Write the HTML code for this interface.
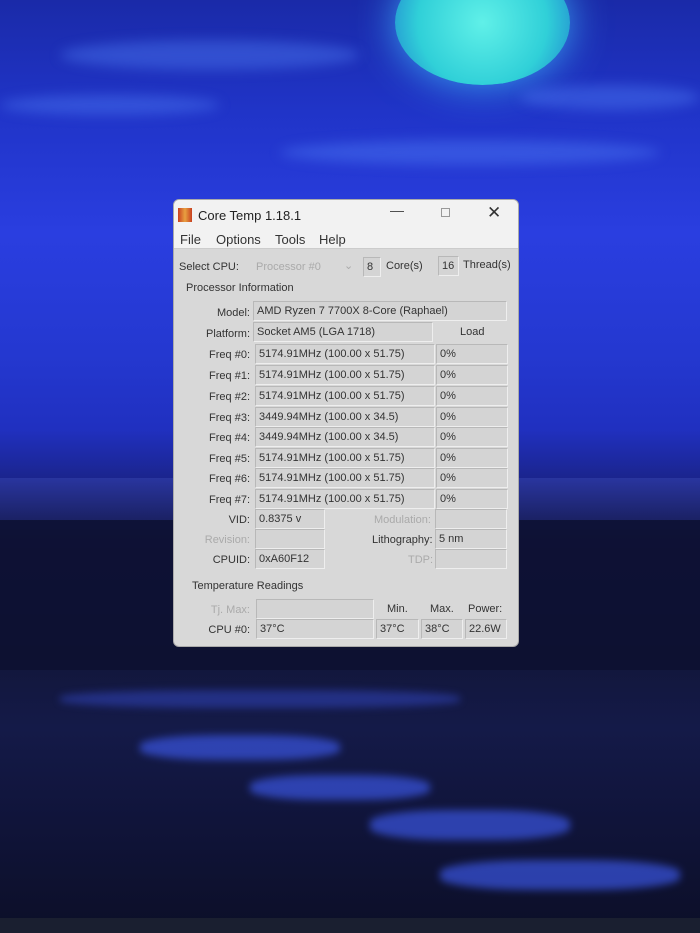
<!DOCTYPE html>
<html><head><meta charset="utf-8"><style>
*{margin:0;padding:0;box-sizing:border-box}
body{width:700px;height:933px;overflow:hidden;position:relative;font-family:"Liberation Sans",sans-serif;
background:linear-gradient(180deg,#1a2aa8 0%,#2034c8 12%,#2a3ee0 25%,#2438d0 38%,#2030c0 46%,#1b2590 51%,#141a50 58%,#12163a 70%,#141a48 78%,#10143a 88%,#0c0f28 100%);}
.moon{position:absolute;left:395px;top:-40px;width:175px;height:125px;border-radius:50%;background:radial-gradient(circle,#60f0e8 0%,#30d0d8 60%,#2080d0 100%);box-shadow:0 0 40px #3aa0f0}
.cloud{position:absolute;border-radius:50%;background:rgba(90,140,255,.35);filter:blur(6px)}
.city{position:absolute;left:0;top:478px;width:700px;height:45px;background:linear-gradient(180deg,#2a36a0,#1a2060);opacity:.95}
.puddle{position:absolute;background:#3a55e0;border-radius:40%;filter:blur(4px);opacity:.7}
.win{position:absolute;left:173px;top:199px;width:346px;height:448px;background:#d8d8d8;border-radius:6px;border:1px solid #aaa;overflow:hidden;color:#333;font-size:11px}
.t{position:absolute;white-space:nowrap}
.box{position:absolute;border:1px solid #b8b8b8;border-right-color:#eee;border-bottom-color:#eee;background:#d4d4d4;padding-left:3px;line-height:18px;height:20px;white-space:nowrap}
.lab{position:absolute;text-align:right;width:76px;left:0;white-space:nowrap}
.g{color:#aaa}
</style></head><body>
<div class="moon"></div>
<div class="cloud" style="left:60px;top:40px;width:300px;height:30px"></div>
<div class="cloud" style="left:280px;top:140px;width:380px;height:25px"></div>
<div class="cloud" style="left:0;top:95px;width:220px;height:20px"></div>
<div class="cloud" style="left:520px;top:85px;width:180px;height:25px"></div>
<div class="city"></div>
<div style="position:absolute;left:0;top:520px;width:700px;height:150px;background:#0d1130;opacity:.85"></div>
<div class="puddle" style="left:140px;top:735px;width:200px;height:25px"></div>
<div class="puddle" style="left:250px;top:775px;width:180px;height:25px"></div>
<div class="puddle" style="left:370px;top:810px;width:200px;height:30px"></div>
<div class="puddle" style="left:440px;top:860px;width:240px;height:30px"></div>
<div class="puddle" style="left:60px;top:690px;width:400px;height:18px;background:#2a3aa0"></div>
<div style="position:absolute;left:0;top:918px;width:700px;height:15px;background:#1a1f30"></div>

<div class="win">
<div style="position:absolute;left:0;top:0;width:346px;height:28px;background:#f2f2f2"></div>
<div style="position:absolute;left:4px;top:8px;width:14px;height:14px;background:linear-gradient(90deg,#c84020,#e8a040,#c84020)"></div>
<div class="t" style="left:24px;top:8px;font-size:13px;color:#222">Core Temp 1.18.1</div>
<div class="t" style="left:216px;top:2px;font-size:14px;color:#444">—</div>
<div style="position:absolute;left:267px;top:8px;width:9px;height:9px;border:1px solid #999"></div>
<div class="t" style="left:313px;top:3px;font-size:17px;color:#333">✕</div>
<div style="position:absolute;left:0;top:28px;width:346px;height:21px;background:#f2f2f2;border-bottom:1px solid #ccc"></div>
<div class="t" style="left:6px;top:32px;font-size:13px">File</div>
<div class="t" style="left:42px;top:32px;font-size:13px">Options</div>
<div class="t" style="left:101px;top:32px;font-size:13px">Tools</div>
<div class="t" style="left:145px;top:32px;font-size:13px">Help</div>

<div class="t" style="left:5px;top:61px">Select CPU:</div>
<div class="t g" style="left:82px;top:61px">Processor #0</div>
<div class="t g" style="left:170px;top:59px">⌄</div>
<div class="box" style="left:189px;top:57px;width:18px">8</div>
<div class="t" style="left:212px;top:60px">Core(s)</div>
<div class="box" style="left:264px;top:56px;width:21px">16</div>
<div class="t" style="left:289px;top:59px">Thread(s)</div>
<div class="t" style="left:12px;top:82px">Processor Information</div>

<div class="lab" style="top:107px">Model:</div><div class="box" style="left:79px;top:101px;width:254px">AMD Ryzen 7 7700X 8-Core (Raphael)</div>
<div class="lab" style="top:128px">Platform:</div><div class="box" style="left:79px;top:122px;width:180px">Socket AM5 (LGA 1718)</div>
<div class="t" style="left:286px;top:126px">Load</div>

<div class="lab" style="top:149px">Freq #0:</div><div class="box" style="left:81px;top:144px;width:180px">5174.91MHz (100.00 x 51.75)</div><div class="box" style="left:262px;top:144px;width:72px">0%</div>
<div class="lab" style="top:170px">Freq #1:</div><div class="box" style="left:81px;top:165px;width:180px">5174.91MHz (100.00 x 51.75)</div><div class="box" style="left:262px;top:165px;width:72px">0%</div>
<div class="lab" style="top:191px">Freq #2:</div><div class="box" style="left:81px;top:186px;width:180px">5174.91MHz (100.00 x 51.75)</div><div class="box" style="left:262px;top:186px;width:72px">0%</div>
<div class="lab" style="top:212px">Freq #3:</div><div class="box" style="left:81px;top:207px;width:180px">3449.94MHz (100.00 x 34.5)</div><div class="box" style="left:262px;top:207px;width:72px">0%</div>
<div class="lab" style="top:232px">Freq #4:</div><div class="box" style="left:81px;top:227px;width:180px">3449.94MHz (100.00 x 34.5)</div><div class="box" style="left:262px;top:227px;width:72px">0%</div>
<div class="lab" style="top:253px">Freq #5:</div><div class="box" style="left:81px;top:248px;width:180px">5174.91MHz (100.00 x 51.75)</div><div class="box" style="left:262px;top:248px;width:72px">0%</div>
<div class="lab" style="top:273px">Freq #6:</div><div class="box" style="left:81px;top:268px;width:180px">5174.91MHz (100.00 x 51.75)</div><div class="box" style="left:262px;top:268px;width:72px">0%</div>
<div class="lab" style="top:294px">Freq #7:</div><div class="box" style="left:81px;top:289px;width:180px">5174.91MHz (100.00 x 51.75)</div><div class="box" style="left:262px;top:289px;width:72px">0%</div>

<div class="lab" style="top:314px">VID:</div><div class="box" style="left:81px;top:309px;width:70px">0.8375 v</div>
<div class="t g" style="left:200px;top:314px">Modulation:</div><div class="box" style="left:261px;top:309px;width:72px"></div>
<div class="lab g" style="top:334px">Revision:</div><div class="box" style="left:81px;top:329px;width:70px"></div>
<div class="t" style="left:198px;top:334px">Lithography:</div><div class="box" style="left:261px;top:329px;width:72px">5 nm</div>
<div class="lab" style="top:354px">CPUID:</div><div class="box" style="left:81px;top:349px;width:70px">0xA60F12</div>
<div class="t g" style="left:234px;top:354px">TDP:</div><div class="box" style="left:261px;top:349px;width:72px"></div>

<div class="t" style="left:18px;top:380px">Temperature Readings</div>
<div class="lab g" style="top:404px">Tj. Max:</div><div class="box" style="left:82px;top:399px;width:118px"></div>
<div class="t" style="left:213px;top:403px">Min.</div>
<div class="t" style="left:256px;top:403px">Max.</div>
<div class="t" style="left:294px;top:403px">Power:</div>
<div class="lab" style="top:424px">CPU #0:</div><div class="box" style="left:82px;top:419px;width:118px">37°C</div>
<div class="box" style="left:202px;top:419px;width:43px">37°C</div>
<div class="box" style="left:247px;top:419px;width:42px">38°C</div>
<div class="box" style="left:291px;top:419px;width:42px">22.6W</div>
</div>
</body></html>
